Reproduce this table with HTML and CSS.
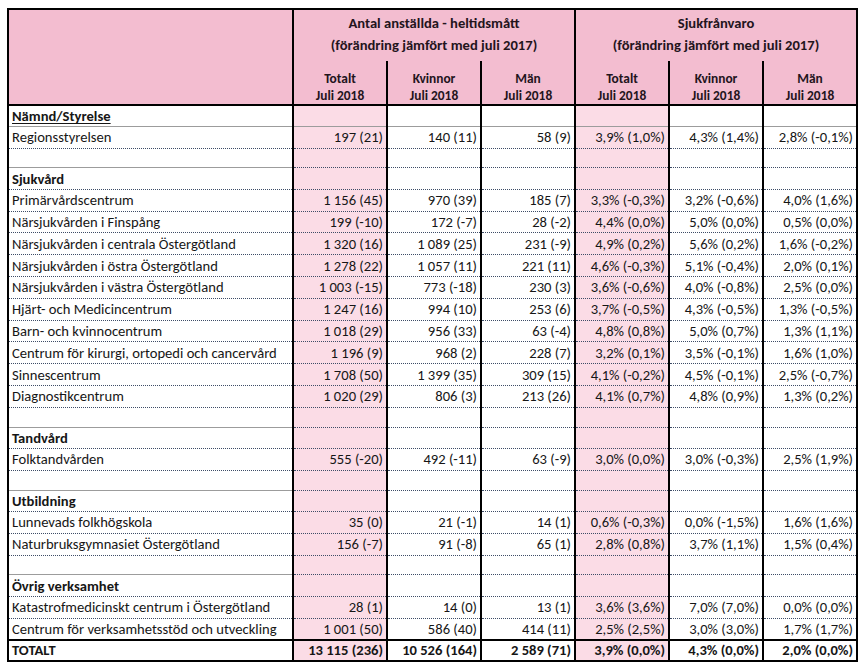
FILE: index.html
```html
<!DOCTYPE html>
<html lang="sv">
<head>
<meta charset="utf-8">
<title>Antal anställda och sjukfrånvaro</title>
<link rel="stylesheet" href="styles.css">
</head>
<body>
<table class="report">
  <colgroup>
    <col class="c-label">
    <col class="c-num"><col class="c-num"><col class="c-num">
    <col class="c-num"><col class="c-num"><col class="c-num">
  </colgroup>
  <thead>
    <tr class="hr1">
      <th rowspan="2" class="h-label"></th>
      <th colspan="3" class="grp">Antal anställda - heltidsmått<br>(förändring jämfört med juli 2017)</th>
      <th colspan="3" class="grp">Sjukfrånvaro<br>(förändring jämfört med juli 2017)</th>
    </tr>
    <tr class="hr2">
      <th class="sub">Totalt<br>Juli 2018</th>
      <th class="sub">Kvinnor<br>Juli 2018</th>
      <th class="sub">Män<br>Juli 2018</th>
      <th class="sub">Totalt<br>Juli 2018</th>
      <th class="sub">Kvinnor<br>Juli 2018</th>
      <th class="sub">Män<br>Juli 2018</th>
    </tr>
  </thead>
  <tbody>
    <tr class="cat first"><td class="lbl"><u>Nämnd/Styrelse</u></td><td class="tot"></td><td></td><td></td><td class="tot"></td><td></td><td></td></tr>
    <tr class="item"><td class="lbl">Regionsstyrelsen</td><td class="tot">197 (21)</td><td>140 (11)</td><td>58 (9)</td><td class="tot">3,9% (1,0%)</td><td>4,3% (1,4%)</td><td>2,8% (-0,1%)</td></tr>
    <tr class="empty"><td class="lbl"></td><td class="tot"></td><td></td><td></td><td class="tot"></td><td></td><td></td></tr>

    <tr class="cat"><td class="lbl">Sjukvård</td><td class="tot"></td><td></td><td></td><td class="tot"></td><td></td><td></td></tr>
    <tr class="item"><td class="lbl">Primärvårdscentrum</td><td class="tot">1 156 (45)</td><td>970 (39)</td><td>185 (7)</td><td class="tot">3,3% (-0,3%)</td><td>3,2% (-0,6%)</td><td>4,0% (1,6%)</td></tr>
    <tr class="item"><td class="lbl">Närsjukvården i Finspång</td><td class="tot">199 (-10)</td><td>172 (-7)</td><td>28 (-2)</td><td class="tot">4,4% (0,0%)</td><td>5,0% (0,0%)</td><td>0,5% (0,0%)</td></tr>
    <tr class="item"><td class="lbl">Närsjukvården i centrala Östergötland</td><td class="tot">1 320 (16)</td><td>1 089 (25)</td><td>231 (-9)</td><td class="tot">4,9% (0,2%)</td><td>5,6% (0,2%)</td><td>1,6% (-0,2%)</td></tr>
    <tr class="item"><td class="lbl">Närsjukvården i östra Östergötland</td><td class="tot">1 278 (22)</td><td>1 057 (11)</td><td>221 (11)</td><td class="tot">4,6% (-0,3%)</td><td>5,1% (-0,4%)</td><td>2,0% (0,1%)</td></tr>
    <tr class="item"><td class="lbl">Närsjukvården i västra Östergötland</td><td class="tot">1 003 (-15)</td><td>773 (-18)</td><td>230 (3)</td><td class="tot">3,6% (-0,6%)</td><td>4,0% (-0,8%)</td><td>2,5% (0,0%)</td></tr>
    <tr class="item"><td class="lbl">Hjärt- och Medicincentrum</td><td class="tot">1 247 (16)</td><td>994 (10)</td><td>253 (6)</td><td class="tot">3,7% (-0,5%)</td><td>4,3% (-0,5%)</td><td>1,3% (-0,5%)</td></tr>
    <tr class="item"><td class="lbl">Barn- och kvinnocentrum</td><td class="tot">1 018 (29)</td><td>956 (33)</td><td>63 (-4)</td><td class="tot">4,8% (0,8%)</td><td>5,0% (0,7%)</td><td>1,3% (1,1%)</td></tr>
    <tr class="item"><td class="lbl">Centrum för kirurgi, ortopedi och cancervård</td><td class="tot">1 196 (9)</td><td>968 (2)</td><td>228 (7)</td><td class="tot">3,2% (0,1%)</td><td>3,5% (-0,1%)</td><td>1,6% (1,0%)</td></tr>
    <tr class="item"><td class="lbl">Sinnescentrum</td><td class="tot">1 708 (50)</td><td>1 399 (35)</td><td>309 (15)</td><td class="tot">4,1% (-0,2%)</td><td>4,5% (-0,1%)</td><td>2,5% (-0,7%)</td></tr>
    <tr class="item"><td class="lbl">Diagnostikcentrum</td><td class="tot">1 020 (29)</td><td>806 (3)</td><td>213 (26)</td><td class="tot">4,1% (0,7%)</td><td>4,8% (0,9%)</td><td>1,3% (0,2%)</td></tr>
    <tr class="empty"><td class="lbl"></td><td class="tot"></td><td></td><td></td><td class="tot"></td><td></td><td></td></tr>

    <tr class="cat"><td class="lbl">Tandvård</td><td class="tot"></td><td></td><td></td><td class="tot"></td><td></td><td></td></tr>
    <tr class="item"><td class="lbl">Folktandvården</td><td class="tot">555 (-20)</td><td>492 (-11)</td><td>63 (-9)</td><td class="tot">3,0% (0,0%)</td><td>3,0% (-0,3%)</td><td>2,5% (1,9%)</td></tr>
    <tr class="empty"><td class="lbl"></td><td class="tot"></td><td></td><td></td><td class="tot"></td><td></td><td></td></tr>

    <tr class="cat"><td class="lbl">Utbildning</td><td class="tot"></td><td></td><td></td><td class="tot"></td><td></td><td></td></tr>
    <tr class="item"><td class="lbl">Lunnevads folkhögskola</td><td class="tot">35 (0)</td><td>21 (-1)</td><td>14 (1)</td><td class="tot">0,6% (-0,3%)</td><td>0,0% (-1,5%)</td><td>1,6% (1,6%)</td></tr>
    <tr class="item"><td class="lbl">Naturbruksgymnasiet Östergötland</td><td class="tot">156 (-7)</td><td>91 (-8)</td><td>65 (1)</td><td class="tot">2,8% (0,8%)</td><td>3,7% (1,1%)</td><td>1,5% (0,4%)</td></tr>
    <tr class="empty"><td class="lbl"></td><td class="tot"></td><td></td><td></td><td class="tot"></td><td></td><td></td></tr>

    <tr class="cat"><td class="lbl">Övrig verksamhet</td><td class="tot"></td><td></td><td></td><td class="tot"></td><td></td><td></td></tr>
    <tr class="item"><td class="lbl">Katastrofmedicinskt centrum i Östergötland</td><td class="tot">28 (1)</td><td>14 (0)</td><td>13 (1)</td><td class="tot">3,6% (3,6%)</td><td>7,0% (7,0%)</td><td>0,0% (0,0%)</td></tr>
    <tr class="item"><td class="lbl">Centrum för verksamhetsstöd och utveckling</td><td class="tot">1 001 (50)</td><td>586 (40)</td><td>414 (11)</td><td class="tot">2,5% (2,5%)</td><td>3,0% (3,0%)</td><td>1,7% (1,7%)</td></tr>
    <tr class="total"><td class="lbl">TOTALT</td><td class="tot">13 115 (236)</td><td>10 526 (164)</td><td>2 589 (71)</td><td class="tot">3,9% (0,0%)</td><td>4,3% (0,0%)</td><td>2,0% (0,0%)</td></tr>
  </tbody>
</table>
</body>
</html>
```

FILE: styles.css
```css
html, body {
  margin: 0;
  padding: 0;
  background: #ffffff;
}

body {
  padding: 8px 0 0 7px;
  font-family: "Carlito", "Lato", "Liberation Sans", sans-serif;
  color: #161616;
}

.report {
  border-collapse: collapse;
  table-layout: fixed;
  width: 849px;
  border: 2px solid #000;
  font-size: 14.6px;
}

.c-label { width: 285px; }
.c-num { width: 94px; }

.report th {
  background: #f3bdd0;
  font-weight: 700;
  color: #23141c;
  padding: 0;
}

.hr1 { height: 52px; }
.hr2 { height: 44px; }

.h-label {
  border-right: 2px solid #000;
  border-bottom: 2px solid #000;
}

.grp {
  font-size: 14.6px;
  line-height: 22px;
  vertical-align: top;
  padding-top: 2px !important;
  border-left: 2px solid #000;
  border-right: 2px solid #000;
  text-align: center;
}

.sub {
  font-size: 13.4px;
  line-height: 16.5px;
  vertical-align: bottom;
  text-align: center;
  border-left: 2px solid #000;
  border-bottom: 2px solid #000;
}

.report td {
  padding: 0 3px 0 2px;
  text-align: right;
  white-space: nowrap;
  vertical-align: middle;
  border-left: 2px solid #000;
  border-bottom: 1px dotted #3d4c66;
  line-height: 18px;
}

.report td.lbl {
  text-align: left;
  padding-left: 3px;
  border-left: none;
}

.report td.tot {
  background: #fbdce6;
}

.cat { height: 21.4px; }
.cat td { font-weight: 700; }
.item { height: 21.8px; }
.empty { height: 19.8px; }
.total { height: 21px; }

.cat.first td {
  border-bottom: 1px solid #9c9c9c;
}

.empty td.lbl {
  border-bottom: 1px solid #9c9c9c;
}

.total td {
  border-top: 2px solid #000;
  border-bottom: none;
  font-weight: 700;
}

u {
  text-decoration-thickness: 1px;
  text-underline-offset: 2px;
}
```
